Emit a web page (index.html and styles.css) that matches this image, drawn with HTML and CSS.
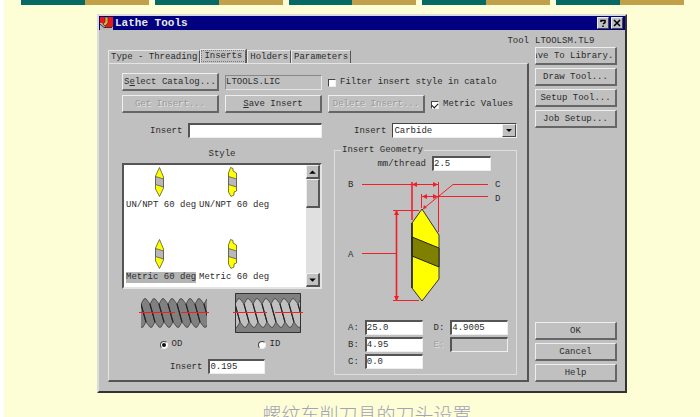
FILE: index.html
```html
<!DOCTYPE html>
<html lang="en">
<head>
<meta charset="utf-8">
<title>Lathe Tools</title>
<link rel="stylesheet" href="styles.css">
</head>
<body>
<svg class="defs" aria-hidden="true">
  <symbol id="insert-full" viewBox="0 0 9 30">
    <path d="M4.500 .5 8.500 10V21L4.500 29.500.5 22V9Z" fill="#ffff00" stroke="#555533" stroke-width=".8"/>
    <path d="M.5 9.500 8.500 12V20L.5 17.500Z" fill="#b8b8b8" stroke="#555" stroke-width=".8"/>
  </symbol>
  <symbol id="insert-partial" viewBox="0 0 9 30">
    <path d="M.5 6 2.500.5 5 1.500V4L8.500 6V24L6 25V28L3 29.500.5 25Z" fill="#ffff00" stroke="#555533" stroke-width=".8"/>
    <path d="M.5 9.500 8.500 12V20L.5 17.500Z" fill="#b8b8b8" stroke="#555" stroke-width=".8"/>
  </symbol>
  <symbol id="thread" viewBox="0 0 66 30">
    <g stroke="#333" stroke-width=".7">
      <path id="turn" d="M-9 6-6 .8H-4L0 6 5 24 2 29.200H0L-4 24Z"/>
      <use href="#turn" x="9"/><use href="#turn" x="18"/><use href="#turn" x="27"/>
      <use href="#turn" x="36"/><use href="#turn" x="45"/><use href="#turn" x="54"/>
      <use href="#turn" x="63"/><use href="#turn" x="72"/>
    </g>
    <path d="M0 6 5 24M9 6 14 24M18 6 23 24M27 6 32 24M36 6 41 24M45 6 50 24M54 6 59 24M63 6 68 24" stroke="#222" stroke-width="1.100"/>
  </symbol>
</svg>
<main class="slide">
  <div class="bars"><i></i><i></i><i></i><i></i><i></i></div>
  <section class="dialog">
    <header class="titlebar">
      <svg class="logo" viewBox="0 0 13 13" aria-hidden="true">
        <path d="M0 0H13V13H0Z" fill="#ee1515"/>
        <path d="M0 6H2L5 10H13V13H0Z" fill="#b8b8b8"/>
        <path d="M0 7 4 10.500H12" fill="none" stroke="#333"/>
        <path d="M5 0H8V6L5 9 3 7 5 5Z" fill="#d8b038" stroke="#333" stroke-width=".7"/>
      </svg>
      <h1>Lathe Tools</h1>
      <button type="button" class="caption-btn" aria-label="Help">
        <svg viewBox="0 0 8 8"><path d="M2 3V1.500H6V3.500L4 5M4 6.500V8" fill="none" stroke="#000" stroke-width="1.500"/></svg>
      </button>
      <button type="button" class="caption-btn" aria-label="Close">
        <svg viewBox="0 0 8 8"><path d="M1 1 7 7M7 1 1 7" stroke="#000" stroke-width="1.600"/></svg>
      </button>
    </header>
    <div class="tool-line"><span>Tool</span><span>LTOOLSM.TL9</span></div>
    <div class="content">
      <div class="tabbed">
        <nav class="tabs" role="tablist">
          <button type="button" role="tab">Type - Threading</button>
          <button type="button" role="tab" class="active" aria-selected="true">Inserts</button>
          <button type="button" role="tab">Holders</button>
          <button type="button" role="tab">Parameters</button>
        </nav>
        <div class="panel">
          <div class="commands">
            <button type="button" class="btn">S<u>e</u>lect Catalog...</button>
            <input class="field" aria-label="Catalog" value="LTOOLS.LIC" readonly>
            <label class="check"><input type="checkbox">Filter insert style in catalo</label>
          </div>
          <div class="commands">
            <button type="button" class="btn" disabled>Get Insert...</button>
            <button type="button" class="btn"><u>S</u>ave Insert</button>
            <div class="pair">
              <button type="button" class="btn" disabled>Delete Insert...</button>
              <label class="check"><input type="checkbox" checked>Metric Values</label>
            </div>
          </div>
          <div class="columns names">
            <div class="labelled name"><label for="name">Insert</label><input class="field" id="name"></div>
            <div class="labelled material"><label for="material">Insert</label>
              <span class="combo">
                <select id="material"><option>Carbide</option></select>
                <svg viewBox="0 0 12 11" aria-hidden="true"><path d="M3 4H9L6 7Z"/></svg>
              </span>
            </div>
          </div>
          <div class="columns">
            <div class="style-side">
              <div class="heading" id="style-title">Style</div>
              <div class="list">
                <ul role="listbox" aria-labelledby="style-title">
                  <li role="option"><svg><use href="#insert-full"/></svg><span>UN/NPT 60 deg</span></li>
                  <li role="option"><svg><use href="#insert-partial"/></svg><span>UN/NPT 60 deg</span></li>
                  <li role="option" class="chosen" aria-selected="true"><svg><use href="#insert-full"/></svg><span>Metric 60 deg</span></li>
                  <li role="option"><svg><use href="#insert-partial"/></svg><span>Metric 60 deg</span></li>
                </ul>
                <div class="scroll">
                  <button type="button" aria-label="Scroll up"><svg viewBox="0 0 10 10"><path d="M2 7H8L5 4Z"/></svg></button>
                  <div class="thumb"></div>
                  <button type="button" class="down" aria-label="Scroll down"><svg viewBox="0 0 10 10"><path d="M2 4H8L5 7Z"/></svg></button>
                </div>
              </div>
              <div class="threads">
                <svg viewBox="0 0 70 40" aria-hidden="true">
                  <use href="#thread" x="2" y="5" width="66" height="30" fill="#808080"/>
                  <path d="M0 19.500H36M42 19.500H70" stroke="#f02020"/>
                </svg>
                <svg viewBox="0 0 70 40" aria-hidden="true">
                  <path d="M2.500.5H67.500V39.500H2.500Z" fill="#808080" stroke="#333"/>
                  <use href="#thread" x="2" y="5" width="66" height="30" fill="#c0c0c0"/>
                  <path d="M2.500.5V39.500M67.500.5V39.500" stroke="#333"/>
                  <path d="M0 19.500H34M42 19.500H70" stroke="#f02020"/>
                </svg>
              </div>
              <div class="sides">
                <label class="check"><input type="radio" name="side" checked>OD</label>
                <label class="check"><input type="radio" name="side">ID</label>
              </div>
              <div class="labelled size"><label for="size">Insert</label><input class="field" id="size" value="0.195"></div>
            </div>
            <fieldset class="geometry">
              <legend>Insert Geometry</legend>
              <div class="labelled pitch"><label for="pitch">mm/thread</label><input class="field" id="pitch" value="2.5"></div>
              <svg class="diagram" viewBox="0 0 181 140">
                <g class="lettering">
                  <text x="13" y="15">B</text><text x="160" y="15">C</text>
                  <text x="160" y="29">D</text><text x="13" y="85">A</text>
                </g>
                <path d="M87 37 104 63V107L87 129 77 116V51Z" fill="#ffff00" stroke="#333"/>
                <path d="M77 65 104 76V95L77 84Z" fill="#808000" stroke="#222"/>
                <path d="M77 51V116" stroke="#222" stroke-width="1.500"/>
                <g fill="none" stroke="#f02028">
                  <path d="M27 12.500H103M103.500 10V60M87 24.500H153M86.500 22V36M153 12.500H118L88 37M58 38.500H84M58 128.500H84M27 81.500H61"/>
                  <path d="M77 10V48M61.500 38V129" stroke-width="1.600"/>
                </g>
                <path d="M77 12.500 82 10V15ZM103 12.500 98 10V15ZM87 24.500 92 22V27ZM103 24.500 98 22V27ZM88 37 89 33 92 36ZM61.500 38 59 43H64ZM61.500 129 59 124H64Z" fill="#f02028"/>
              </svg>
              <div class="dims">
                <div class="labelled"><label for="a">A:</label><input class="field" id="a" value="25.0"></div>
                <div class="labelled"><label for="b">B:</label><input class="field" id="b" value="4.95"></div>
                <div class="labelled"><label for="c">C:</label><input class="field" id="c" value="0.0"></div>
                <div class="labelled"><label for="d">D:</label><input class="field" id="d" value="4.9005"></div>
                <div class="labelled off"><label for="e">E:</label><input class="field" id="e" disabled></div>
              </div>
            </fieldset>
          </div>
        </div>
      </div>
      <aside class="actions">
        <button type="button" class="btn">Save To Library...</button>
        <button type="button" class="btn">Draw Tool...</button>
        <button type="button" class="btn">Setup Tool...</button>
        <button type="button" class="btn">Job Setup...</button>
        <button type="button" class="btn confirm">OK</button>
        <button type="button" class="btn">Cancel</button>
        <button type="button" class="btn">Help</button>
      </aside>
    </div>
  </section>
  <p class="caption" lang="zh-CN">螺纹车削刀具的刀头设置</p>
</main>
</body>
</html>
```
FILE: styles.css
```css
* { box-sizing: border-box; }

body {
  margin: 0;
  background: #fff;
  overflow: hidden;
}

body, button, input, select {
  font: 9px/11px "Liberation Mono", monospace;
  color: #2c2c2c;
}

.defs { position: absolute; width: 0; height: 0; }

.slide {
  height: 100vh;
  margin-left: 4px;
  overflow: hidden;
  background: #fefed6;
}

.bars {
  display: grid;
  grid-template-columns: repeat(5, 1fr);
  gap: 6px;
  margin: 0 16px 9px 17px;
}
.bars i { height: 5px; background: linear-gradient(90deg, #066a64 50%, #c2a04a 50%); }

.dialog {
  margin: 0 73px 0 93px;
  border: 2px solid;
  border-color: #dcdcdc #333 #333 #dcdcdc;
  background: #c0c0c0;
}

.titlebar {
  display: flex;
  align-items: center;
  gap: 2px;
  height: 14px;
  padding: 0 2px 0 1px;
  background: #000080;
}
.titlebar h1 {
  flex: 1;
  margin: 0;
  font-size: 11px;
  line-height: 14px;
  color: #e8e8e8;
}
.logo { width: 13px; height: 13px; }
.caption-btn {
  display: grid;
  place-items: center;
  width: 12px;
  height: 12px;
  padding: 0;
  border: 1px solid;
  border-color: #eee #444 #444 #eee;
  background: #c0c0c0;
}
.caption-btn svg { width: 8px; height: 8px; }

.tool-line, .content {
  display: grid;
  grid-template-columns: 1fr 82px;
  column-gap: 6px;
  padding: 0 8px 0 9px;
}
.tool-line { padding-top: 6px; white-space: nowrap; }
.tool-line span:first-child { text-align: right; }
.content { padding-bottom: 9px; }

.tabbed { padding-top: 2px; min-width: 0; }
.tabs { display: flex; align-items: flex-end; height: 14px; }
.tabs button {
  height: 13px;
  padding: 1px 2px 0;
  border: solid;
  border-width: 1px 1px 0;
  border-color: #e8e8e8 #555 #e8e8e8 #e8e8e8;
  background: #c0c0c0;
  white-space: nowrap;
}
.tabs .active {
  height: 14px;
  padding: 0 3px;
  outline: 1px dotted #777;
  outline-offset: -2px;
  border-right-width: 2px;
}

.panel {
  padding: 9px 10px 5px 13px;
  border: solid;
  border-width: 1px 2px 2px 1px;
  border-color: #e4e4e4 #555 #555 #e4e4e4;
}

.btn {
  display: flex;
  align-items: center;
  justify-content: center;
  height: 18px;
  min-width: 0;
  padding: 2px 0 0;
  overflow: hidden;
  border: solid;
  border-width: 1px 2px 2px 1px;
  border-color: #eee #666 #666 #eee;
  background: #c0c0c0;
  white-space: nowrap;
}
.btn:disabled { color: #999; text-shadow: 1px 1px #e4e4e4; }

.field {
  width: 100%;
  min-width: 0;
  height: 15px;
  padding: 0;
  border: solid;
  border-width: 2px 1px 1px 2px;
  border-color: #555 #eee #eee #555;
  border-radius: 0;
  background: #fff;
}
.field:read-only { border-width: 1px; border-color: #888 #e4e4e4 #e4e4e4 #888; background: #c0c0c0; }
.field:disabled { border-width: 2px 1px 1px 2px; border-color: #555 #eee #eee #555; }

.commands {
  display: grid;
  grid-template-columns: 97px 97px 1fr;
  align-items: center;
  gap: 6px;
  height: 18px;
  margin-bottom: 4px;
}
.pair { display: grid; grid-template-columns: 97px 1fr; gap: 6px; }

.check { display: flex; align-items: center; gap: 4px; padding-top: 1px; white-space: nowrap; }
.check input {
  appearance: none;
  display: grid;
  place-items: center;
  width: 8px;
  height: 8px;
  margin: 0;
  border: 1px solid;
  border-color: #444 #eee #eee #444;
  background: #fff;
}
.check input[type="radio"] { border-radius: 50%; }
.check input[type="radio"]:checked::after {
  content: "";
  width: 4px;
  height: 4px;
  border-radius: 50%;
  background: #111;
}
.check input[type="checkbox"]:checked::after {
  content: "";
  width: 5px;
  height: 3px;
  border: solid #111;
  border-width: 0 0 1px 1px;
  transform: rotate(-45deg);
}

.columns { display: grid; grid-template-columns: 200px 1fr; gap: 12px; }
.names { margin: 10px 0 7px; }
.labelled { display: flex; align-items: center; gap: 6px; }
.labelled label { padding-top: 1px; white-space: nowrap; }
.name { padding-left: 28px; }
.material { padding-left: 20px; }

.combo {
  display: flex;
  flex: 1;
  height: 15px;
  border: 1px solid;
  border-color: #444 #eee #eee #444;
  background: #fff;
}
.combo select {
  appearance: none;
  flex: 1;
  min-width: 0;
  padding: 1px 1px 0;
  border: 0;
  background: transparent;
}
.combo svg {
  width: 14px;
  border: 1px solid;
  border-color: #eee #444 #444 #eee;
  background: #c0c0c0;
}

.style-side { padding-top: 4px; }
.heading { margin-bottom: 3px; text-align: center; }

.list {
  display: flex;
  height: 126px;
  border: 2px solid;
  border-color: #555 #e4e4e4 #e4e4e4 #555;
  background: #fff;
}
.list ul {
  display: grid;
  flex: 1;
  grid-template-columns: 73px 73px;
  grid-auto-rows: 72px;
  margin: 0;
  padding: 0 0 0 2px;
  overflow: hidden;
  list-style: none;
}
.list li {
  display: flex;
  flex-direction: column;
  align-items: flex-start;
  gap: 3px;
  padding-top: 2px;
  white-space: nowrap;
}
.list li svg { width: 9px; height: 30px; margin-left: 29px; }
.chosen span { background: #b4b4b4; }

.scroll { display: flex; flex-direction: column; width: 14px; background: #e0e0e0; }
.scroll button, .thumb {
  height: 14px;
  padding: 0;
  border: solid;
  border-width: 1px 2px 2px 1px;
  border-color: #eee #555 #555 #eee;
  background: #c0c0c0;
}
.scroll svg { display: block; width: 100%; height: 100%; }
.thumb { height: 29px; }
.down { margin-top: auto; }

.threads { display: flex; gap: 24px; padding: 4px 0 5px 17px; }
.threads svg { width: 70px; height: 40px; }
.sides {
  display: grid;
  grid-template-columns: 1fr 1fr;
  justify-items: center;
  padding-right: 4px;
}
.size { padding: 9px 57px 0 48px; }

.geometry {
  min-width: 0;
  margin: 0;
  padding: 0;
  border: 1px solid #dedede;
}
.geometry legend { margin-left: 6px; padding: 0 1px; }
.pitch { justify-content: flex-end; padding-right: 25px; }
.pitch .field { width: 59px; }
.diagram { display: block; width: 100%; height: 140px; margin: 1px 0 8px; }
.lettering { fill: #2c2c2c; }

.dims {
  display: grid;
  grid-template: repeat(3, 15px) / 1fr 1fr;
  grid-auto-flow: column;
  gap: 2px 11px;
  padding: 0 8px 5px 13px;
}
.off label { color: #a0a0a0; text-shadow: 1px 1px #e0e0e0; }

.actions { display: flex; flex-direction: column; gap: 3px; }
.confirm { margin-top: auto; }

.caption {
  margin: 8px 0 0 30px;
  font: 300 19px/26px "Noto Sans CJK SC", sans-serif;
  text-align: center;
  color: #a2a2b8;
}
```
